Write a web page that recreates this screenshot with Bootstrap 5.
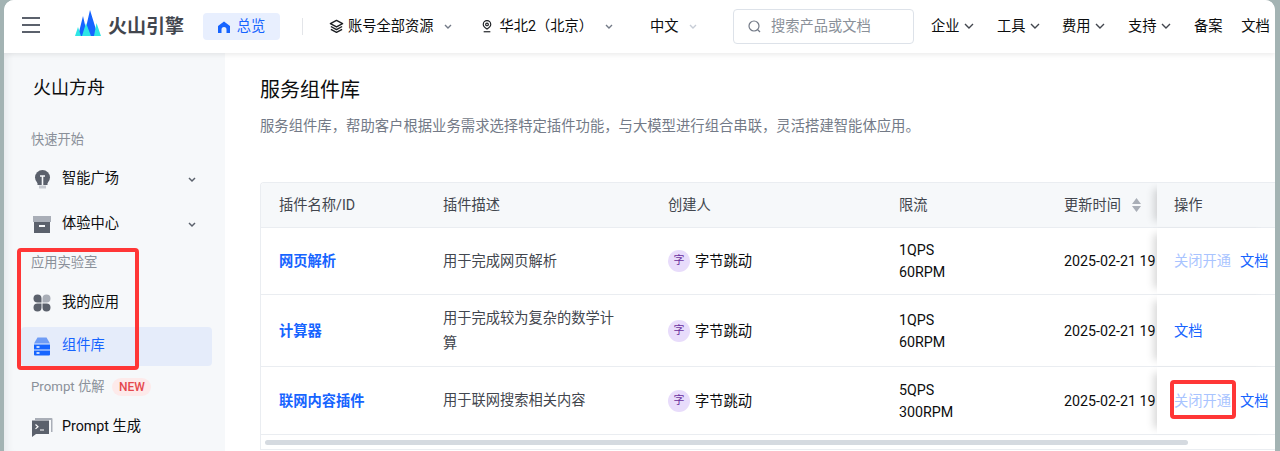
<!DOCTYPE html>
<html lang="zh">
<head>
<meta charset="utf-8">
<title>服务组件库</title>
<link href="https://cdn.jsdelivr.net/npm/bootstrap@5.3.0/dist/css/bootstrap.min.css" rel="stylesheet">
<style>
html,body{height:451px;overflow:hidden;background:#a3b3b3;}
body{font-family:Roboto,"Noto Sans CJK SC",sans-serif;font-size:14.25px;color:#0c0d0e;}
.shell{width:1271px;height:451px;margin-left:4px;background:#fff;border-radius:10px 10px 0 0;overflow:hidden;display:flex;flex-direction:column;}
.topbar{height:53px;flex:none;box-shadow:0 1px 6px rgba(0,0,0,.1);position:relative;z-index:3;background:#fff;padding-left:18px;}
.burger{width:18px;margin-bottom:3px;}
.logo-mark{margin-left:35px;margin-bottom:8px;flex:none;}
.logo-text{font-size:19px;font-weight:700;color:#42464e;margin-left:6px;width:75px;white-space:nowrap;line-height:1;}
.home-pill{margin-left:20px;width:77px;height:27px;background:#e8effe;border-radius:4px;color:#1664ff;gap:7px;flex:none;}
.vsep{width:1px;height:17px;background:#e3e5e9;margin-left:22px;flex:none;}
.nav-sel{white-space:nowrap;flex:none;}
.search-fake{width:181px;height:35px;border:1px solid #dde2e9;border-radius:4px;color:#8a9099;padding-left:14px;gap:10px;flex:none;}
.chev{flex:none;}
.side{width:221px;flex:none;background:#f6f8fa;padding-top:22px;position:relative;box-shadow:inset 9px 0 8px -7px rgba(40,60,70,.09);}
.side-title{font-size:18px;line-height:26px;padding-left:29px;margin-bottom:30px;color:#0c0d0e;}
.side-group{font-size:13.25px;line-height:18px;color:#8a9099;padding-left:27px;}
.side-item{height:39px;margin-left:17px;width:191px;padding-left:12px;gap:11px;border-radius:4px;position:relative;margin-bottom:5px;}
.side-item.on{background:#e5ecfa;color:#1664ff;}
.side-item .chev{position:absolute;right:16px;top:17px;}
.side-ico{width:18px;height:20px;flex:none;overflow:visible;}
.new-tag{background:#fdeaea;color:#e5484d;font-size:12px;font-weight:500;line-height:18px;height:18px;padding:0 6.5px;border-radius:9px;margin-left:8px;display:inline-block;}
.main-pane{flex:1;padding:24px 0 0 35px;min-width:0;overflow:hidden;}
.pg-title{font-size:20px;line-height:26px;color:#0c0d0e;margin:0 0 14px;}
.pg-desc{font-size:14.35px;line-height:20px;color:#737a87;margin:0 0 45px;white-space:nowrap;}
.tbl-box{border:1px solid #eaedf1;border-right:0;border-radius:4px 0 0 0;position:relative;height:268px;overflow:hidden;}
.tbl-row{display:grid;grid-template-columns:164px 225px 231px 165px 111px 118px;border-bottom:1px solid #eaedf1;align-items:center;}
.tbl-row>div{padding-left:18px;line-height:22px;white-space:nowrap;overflow:hidden;}
.tbl-row>div:nth-child(2){padding-right:30px;white-space:normal;line-height:25px;color:#42464e;}
.tbl-head{height:45px;background:#f6f8fa;color:#42464e;}
.r1{height:67px;}.r2{height:72px;}.r3{height:68px;}
.plugin{color:#1664ff;font-weight:700;text-decoration:none;}
.avatar{width:22px;height:22px;border-radius:50%;background:#e8dcfb;color:#6a2f9e;font-size:11px;display:inline-flex;align-items:center;justify-content:center;margin-right:5px;flex:none;}
.tbl-row>div.cell-ops{padding-left:17px;align-self:stretch;display:flex;align-items:center;gap:9px;background:#fff;position:relative;box-shadow:-9px 0 8px -6px rgba(0,0,0,.16);overflow:visible;}
.tbl-head>div.cell-ops{background:#f6f8fa;}
.op-dim{color:#a9c4ff;text-decoration:none;}
.op-link{color:#1664ff;text-decoration:none;}
.scroll-track{height:16px;position:relative;}
.scroll-thumb{position:absolute;left:4px;top:5px;width:923px;height:5px;background:#d5dae0;border-radius:3px;}
.mark-box{position:absolute;border:4px solid #ff3636;border-radius:4px;z-index:5;pointer-events:none;}
.mark-a{left:17px;top:248px;width:122px;height:122px;}
.mark-b{left:1170px;top:380px;width:66px;height:39px;}
</style>
</head>
<body>
<div class="shell position-relative">
  <header class="topbar d-flex align-items-center">
    <svg class="burger" height="16" viewBox="0 0 18 16" fill="none" stroke="#5b616c" stroke-width="2"><path d="M0 1h18M0 8h18M0 15h18"/></svg>
    <svg class="logo-mark" width="27" height="26" viewBox="0 0 27 26"><path d="M3 26 8 6l4.500 20zM9 26 15 0l8 26z" fill="#1664ff"/><path d="M0 26 3 17l3 9zM7 26l4-13 5 13zM19 26l2.500-13 4.500 13z" fill="#2ee6e6"/></svg>
    <span class="logo-text">火山引擎</span>
    <span class="home-pill d-inline-flex align-items-center justify-content-center">
      <svg width="12" height="12" viewBox="0 0 12 12"><path d="M6 .5 12 5v7H8.500V8.500a2.500 2.500 0 0 0-5 0V12H0V5z" fill="#1664ff"/></svg>总览</span>
    <span class="vsep"></span>
    <span class="nav-sel d-inline-flex align-items-center" style="margin-left:26px">
      <svg width="15" height="15" viewBox="0 0 16 16" fill="none" stroke="#1c1f23" stroke-width="1.500" stroke-linejoin="round"><path d="M8 1.500 14.500 5 8 8.500 1.500 5zM2 8l6 3.300L14 8M2 11l6 3.300 6-3.300"/></svg>
      <span style="margin-left:4px">账号全部资源</span>
      <svg class="chev" style="margin-left:10px" width="8" height="6" viewBox="0 0 8 6" fill="none" stroke="#737a87" stroke-width="1.400"><path d="M1 1l3 3 3-3"/></svg>
    </span>
    <span class="nav-sel d-inline-flex align-items-center" style="margin-left:30px">
      <svg width="10" height="15" viewBox="0 0 12 15" fill="none" stroke="#1c1f23" stroke-width="1.400"><path d="M6 10.500C3 8.500 1.500 7 1.500 5a4.500 4.500 0 0 1 9 0c0 2-1.500 3.500-4.500 5.500z"/><circle cx="6" cy="5" r="1.600"/><path d="M2 13.800h8"/></svg>
      <span style="margin-left:8px">华北2（北京）</span>
      <svg class="chev" style="margin-left:12px" width="8" height="6" viewBox="0 0 8 6" fill="none" stroke="#737a87" stroke-width="1.400"><path d="M1 1l3 3 3-3"/></svg>
    </span>
    <span class="nav-sel d-inline-flex align-items-center" style="margin-left:37px">
      <span>中文</span>
      <svg class="chev" style="margin-left:10.500px" width="8" height="6" viewBox="0 0 8 6" fill="none" stroke="#c7ccd6" stroke-width="1.400"><path d="M1 1l3 3 3-3"/></svg>
    </span>
    <span class="search-fake d-inline-flex align-items-center" style="margin-left:36px">
      <svg width="13" height="13" viewBox="0 0 13 13" fill="none" stroke="#737a87" stroke-width="1.200"><circle cx="6" cy="6" r="5"/><path d="M9.500 9.500 12 12"/></svg>
      <span>搜索产品或文档</span>
    </span>
    <span class="nav-sel d-inline-flex align-items-center" style="margin-left:17px">企业<svg class="chev" style="margin-left:4.500px" width="10" height="7" viewBox="0 0 10 7" fill="none" stroke="#42464e" stroke-width="1.400"><path d="M1 1l4 4 4-4"/></svg></span>
    <span class="nav-sel d-inline-flex align-items-center" style="margin-left:23px">工具<svg class="chev" style="margin-left:4.500px" width="10" height="7" viewBox="0 0 10 7" fill="none" stroke="#42464e" stroke-width="1.400"><path d="M1 1l4 4 4-4"/></svg></span>
    <span class="nav-sel d-inline-flex align-items-center" style="margin-left:22px">费用<svg class="chev" style="margin-left:4.500px" width="10" height="7" viewBox="0 0 10 7" fill="none" stroke="#42464e" stroke-width="1.400"><path d="M1 1l4 4 4-4"/></svg></span>
    <span class="nav-sel d-inline-flex align-items-center" style="margin-left:23px">支持<svg class="chev" style="margin-left:4.500px" width="10" height="7" viewBox="0 0 10 7" fill="none" stroke="#42464e" stroke-width="1.400"><path d="M1 1l4 4 4-4"/></svg></span>
    <span class="nav-sel" style="margin-left:23px">备案</span>
    <span class="nav-sel" style="margin-left:18.500px">文档</span>
  </header>
  <div class="d-flex flex-grow-1" style="min-height:0">
    <aside class="side">
      <div class="side-title">火山方舟</div>
      <div class="side-group">快速开始</div>
      <div style="height:10.500px"></div>
      <div class="side-item d-flex align-items-center" style="margin-bottom:6px">
        <svg class="side-ico" viewBox="0 0 18 20"><circle cx="9.500" cy="8.500" r="7.500" fill="#5b616c"/><path d="M4.500 13h10v3h-10z" fill="#5b616c"/><rect x="6" y="16.500" width="7" height="3" fill="#c5c9d0"/><path d="M7 7h5M9.500 7v9" fill="none" stroke="#f6f8fa" stroke-width="1.600"/></svg>
        <span>智能广场</span>
        <svg class="chev" width="8" height="6" viewBox="0 0 8 6" fill="none" stroke="#5b616c" stroke-width="1.500"><path d="M1 1l3 3 3-3"/></svg>
      </div>
      <div class="side-item d-flex align-items-center">
        <svg class="side-ico" viewBox="0 0 18 20"><rect x="0" y="2" width="18" height="6" fill="#a9aeb7"/><path d="M1 8h16v11H1z" fill="#5b616c"/><rect x="6" y="11" width="6" height="2" fill="#f6f8fa"/></svg>
        <span>体验中心</span>
        <svg class="chev" width="8" height="6" viewBox="0 0 8 6" fill="none" stroke="#5b616c" stroke-width="1.500"><path d="M1 1l3 3 3-3"/></svg>
      </div>
      <div class="side-group" style="margin-top:10.500px">应用实验室</div>
      <div style="height:11.500px"></div>
      <div class="side-item d-flex align-items-center" style="margin-bottom:4px">
        <svg class="side-ico" viewBox="0 0 18 20"><path d="M4.500 1.500a4 4 0 0 1 4 4v4H4.500a4 4 0 0 1 0-8z" fill="#5b616c"/><path d="M13.500 1.500a4 4 0 0 0-4 4v4h4a4 4 0 0 0 0-8z" fill="#a9aeb7"/><path d="M4.500 18.500a4 4 0 0 0 4-4v-4H4.500a4 4 0 0 0 0 8zM13.500 18.500a4 4 0 0 1-4-4v-4h4a4 4 0 0 1 0 8z" fill="#5b616c"/></svg>
        <span>我的应用</span>
      </div>
      <div class="side-item on d-flex align-items-center">
        <svg class="side-ico" viewBox="0 0 18 20"><path d="M4.500 1.500h9L17 7.500H1z" fill="#6f9cf5"/><path d="M1 8.500h16v5H1zM1 14.500h16v4a1 1 0 0 1-1 1H2a1 1 0 0 1-1-1z" fill="#1664ff"/><path d="M3.500 11h3M3.500 17h3" stroke="#fff" stroke-width="1.400"/></svg>
        <span>组件库</span>
      </div>
      <div class="side-group d-flex align-items-center" style="margin-top:11px;height:20px">Prompt 优解<span class="new-tag">NEW</span></div>
      <div style="height:10.500px"></div>
      <div class="side-item d-flex align-items-center">
        <svg class="side-ico" viewBox="0 0 18 20"><path d="M2 1h16.500a1 1 0 0 1 1 1v13H18V3H2z" fill="#a9aeb7"/><path d="M-1 3.500h17V17H3l-4 3z" fill="#5b616c"/><path d="M2.500 7.500l2.500 2.200-2.500 2.200M7 13h4" fill="none" stroke="#fff" stroke-width="1.200"/></svg>
        <span>Prompt 生成</span>
      </div>
    </aside>
    <main class="main-pane">
      <h1 class="pg-title fw-normal">服务组件库</h1>
      <p class="pg-desc">服务组件库，帮助客户根据业务需求选择特定插件功能，与大模型进行组合串联，灵活搭建智能体应用。</p>
      <div class="tbl-box">
        <div class="tbl-row tbl-head">
          <div>插件名称/ID</div><div>插件描述</div><div>创建人</div><div>限流</div>
          <div class="d-flex align-items-center">更新时间<svg style="margin-left:11px" width="9" height="14" viewBox="0 0 9 14" fill="#a9aeb7"><path d="M4.500 0 9 6H0zM4.500 14 0 8h9z"/></svg></div>
          <div class="cell-ops">操作</div>
        </div>
        <div class="tbl-row r1">
          <div><a class="plugin" href="#">网页解析</a></div><div>用于完成网页解析</div>
          <div class="d-flex align-items-center"><span class="avatar">字</span>字节跳动</div>
          <div>1QPS<br>60RPM</div><div>2025-02-21 19</div>
          <div class="cell-ops"><a class="op-dim" href="#">关闭开通</a><a class="op-link" href="#">文档</a></div>
        </div>
        <div class="tbl-row r2">
          <div><a class="plugin" href="#">计算器</a></div><div>用于完成较为复杂的数学计算</div>
          <div class="d-flex align-items-center"><span class="avatar">字</span>字节跳动</div>
          <div>1QPS<br>60RPM</div><div>2025-02-21 19</div>
          <div class="cell-ops"><a class="op-link" href="#">文档</a></div>
        </div>
        <div class="tbl-row r3">
          <div><a class="plugin" href="#">联网内容插件</a></div><div>用于联网搜索相关内容</div>
          <div class="d-flex align-items-center"><span class="avatar">字</span>字节跳动</div>
          <div>5QPS<br>300RPM</div><div>2025-02-21 19</div>
          <div class="cell-ops"><a class="op-dim" href="#">关闭开通</a><a class="op-link" href="#">文档</a></div>
        </div>
        <div class="scroll-track"><div class="scroll-thumb"></div></div>
      </div>
    </main>
  </div>
</div>
<div class="mark-box mark-a"></div>
<div class="mark-box mark-b"></div>
</body>
</html>
